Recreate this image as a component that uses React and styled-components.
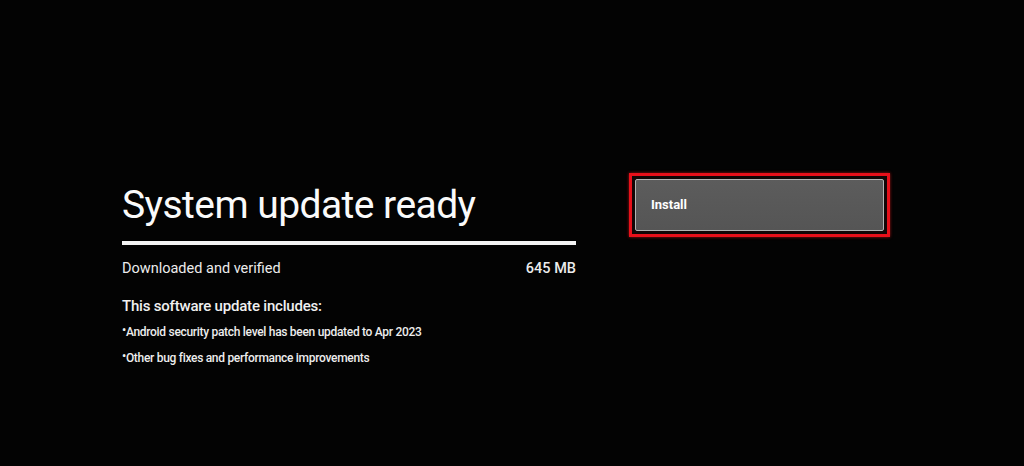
import styled, { createGlobalStyle } from 'styled-components';

const GlobalStyle = createGlobalStyle`
    html, body {
        margin: 0;
        padding: 0;
        background: #030303;
    }
    body {
        font-family: Roboto, 'Liberation Sans', sans-serif;
        color: #f2f2f2;
    }
`;

const updateNotes = [
    'Android security patch level has been updated to Apr 2023',
    'Other bug fixes and performance improvements',
];

function App() {
    return (
        <>
            <GlobalStyle />
            <Screen>
                <InfoColumn>
                    <Title>System update ready</Title>
                    <ProgressBar />
                    <StatusRow>
                        <span>Downloaded and verified</span>
                        <Size>645 MB</Size>
                    </StatusRow>
                    <NotesHeading>This software update includes:</NotesHeading>
                    <NotesList>
                        {updateNotes.map((note) => (
                            <Note key={note}>{note}</Note>
                        ))}
                    </NotesList>
                </InfoColumn>
                <ActionColumn>
                    <FocusRing>
                        <InstallButton type="button">Install</InstallButton>
                    </FocusRing>
                </ActionColumn>
            </Screen>
        </>
    );
}
export default App;

const Screen = styled.div`
    width: 1024px;
    height: 466px;
    box-sizing: border-box;
    padding: 181px 0 0 122px;
    display: flex;
    gap: 53px;
    align-items: flex-start;
`;

const InfoColumn = styled.div`
    width: 454px;
    display: flex;
    flex-direction: column;
`;

const Title = styled.h1`
    margin: 0;
    font-size: 39px;
    font-weight: 400;
    line-height: 48px;
    letter-spacing: -0.55px;
    color: #fafafa;
`;

const ProgressBar = styled.div`
    margin-top: 12px;
    height: 4px;
    background: #f4f4f4;
`;

const StatusRow = styled.div`
    margin-top: 15px;
    display: flex;
    justify-content: space-between;
    font-size: 14.5px;
    line-height: 18px;
    color: #ececec;
`;

const Size = styled.span`
    font-weight: 500;
`;

const NotesHeading = styled.div`
    margin-top: 19px;
    font-size: 15px;
    font-weight: 500;
    line-height: 18px;
    letter-spacing: -0.2px;
    color: #f0f0f0;
`;

const NotesList = styled.ul`
    list-style: none;
    margin: 9px 0 0;
    padding: 0;
    display: flex;
    flex-direction: column;
    gap: 10px;
`;

const Note = styled.li`
    font-size: 12px;
    font-weight: 500;
    line-height: 16px;
    letter-spacing: -0.3px;
    color: #ededed;
    &::before {
        content: '•';
        position: relative;
        top: -2px;
    }
`;

const ActionColumn = styled.div`
    margin-top: -8px;
`;

const FocusRing = styled.div`
    padding: 3px;
    border: 3px solid #e8101a;
    box-shadow: 0 0 3px rgba(255, 30, 30, 0.6);
    background: #120606;
`;

const InstallButton = styled.button`
    display: flex;
    align-items: center;
    width: 249px;
    height: 52px;
    box-sizing: border-box;
    padding: 0 0 2px 15px;
    border: 1px solid #b4b4b4;
    border-radius: 2px;
    background: linear-gradient(180deg, #5c5c5c 0%, #555555 100%);
    color: #ffffff;
    font-family: Roboto, 'Liberation Sans', sans-serif;
    font-size: 13px;
    font-weight: 700;
    cursor: pointer;
`;
